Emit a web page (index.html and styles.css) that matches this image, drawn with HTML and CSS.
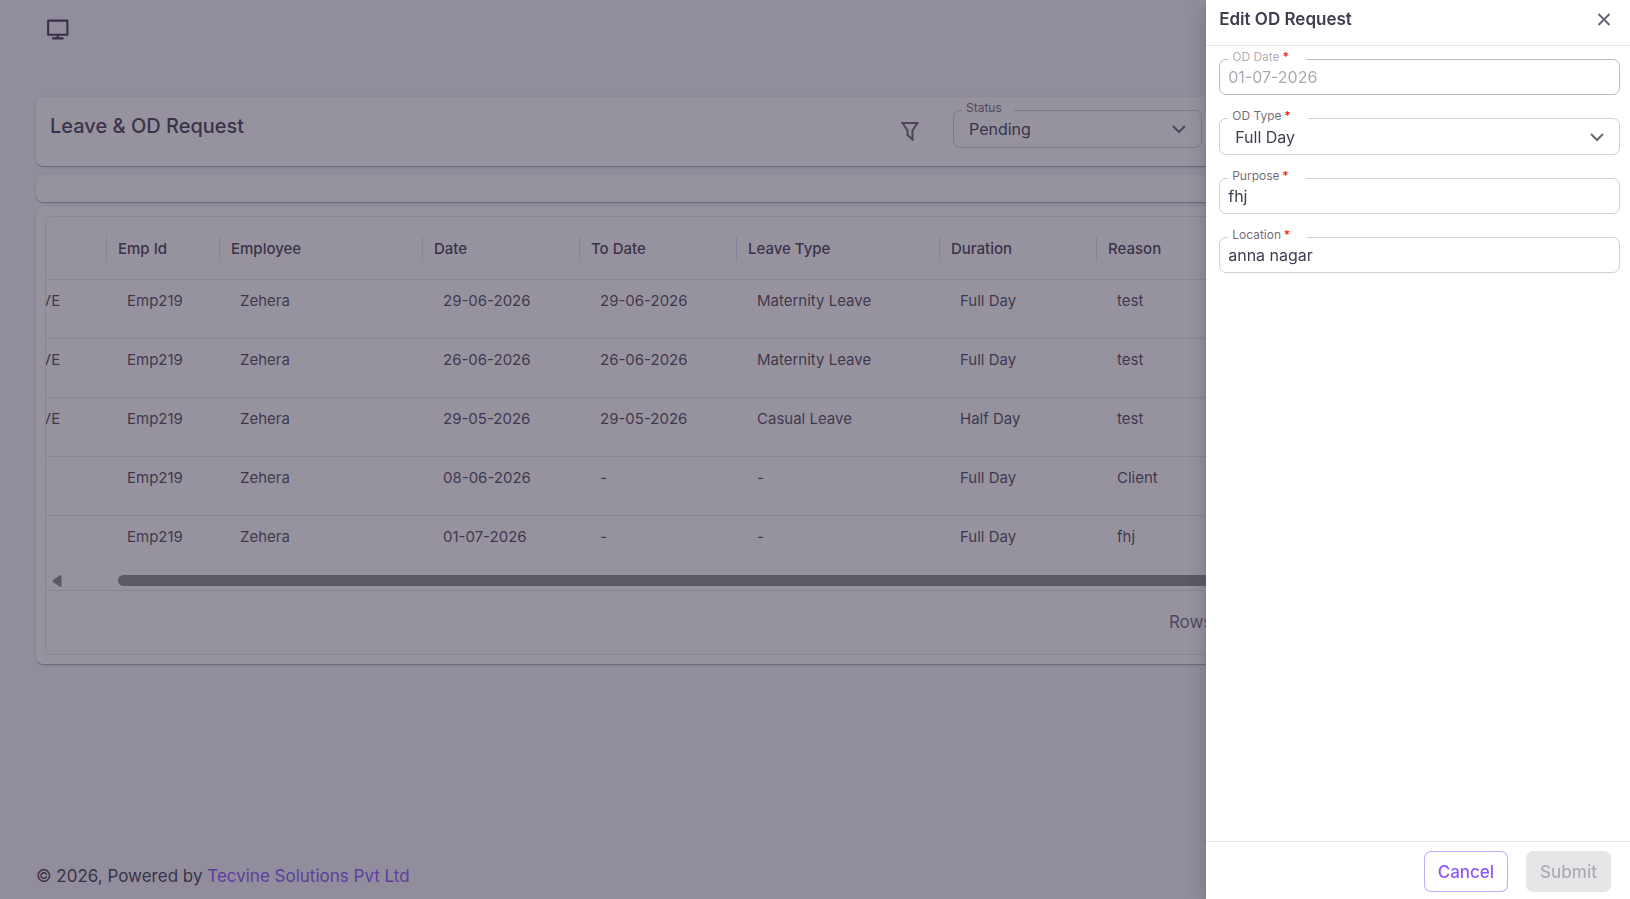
FILE: index.html
```html
<!DOCTYPE html>
<html lang="en">
<head>
    <meta charset="UTF-8">
    <meta name="viewport" content="width=device-width, initial-scale=1.0">
    <title>Leave &amp; OD Request</title>
    <link rel="stylesheet" href="styles.css">
</head>
<body>

    <div class="page">
        <header class="navbar">
            <button type="button" class="icon-button" aria-label="Display mode">
                <svg width="25" height="25" viewBox="0 0 24 24" fill="none" stroke="currentColor" stroke-width="2" stroke-linejoin="round" stroke-linecap="round">
                    <path d="M3 3.500h18.500v13.500H3zM12.200 17v3M7.500 20.500h9.500"/>
                </svg>
            </button>
        </header>

        <main class="content">
            <section class="card toolbar">
                <h1>Leave &amp; OD Request</h1>
                <div class="toolbar-actions">
                    <button type="button" class="icon-button filter-button" aria-label="Filter">
                        <svg width="18" height="20" viewBox="0 0 18 20" fill="none" stroke="currentColor" stroke-width="2">
                            <path d="M1.500 2h15l-5 7.500v9l-5-4.500V9.500z"/>
                        </svg>
                    </button>
                    <div class="field status-field">
                        <label for="status">Status</label>
                        <select id="status">
                            <option>Pending</option>
                        </select>
                        <svg class="chevron" width="14" height="9" viewBox="0 0 14 9" fill="none" stroke="currentColor" stroke-width="2">
                            <path d="M1 1l6 6 6-6"/>
                        </svg>
                    </div>
                </div>
            </section>

            <section class="card spacer-card"></section>

            <section class="card grid-card">
                <div class="data-grid">
                    <table>
                        <colgroup>
                            <col class="col-small">
                            <col class="col-small">
                            <col class="col-large">
                            <col class="col-medium">
                            <col class="col-medium">
                            <col class="col-large">
                            <col class="col-medium">
                            <col>
                        </colgroup>
                        <thead>
                            <tr>
                                <th><span>&nbsp;</span></th>
                                <th><span>Emp Id</span></th>
                                <th><span>Employee</span></th>
                                <th><span>Date</span></th>
                                <th><span>To Date</span></th>
                                <th><span>Leave Type</span></th>
                                <th><span>Duration</span></th>
                                <th><span>Reason</span></th>
                            </tr>
                        </thead>
                        <tbody>
                            <tr><td>LEAVE</td><td>Emp219</td><td>Zehera</td><td>29-06-2026</td><td>29-06-2026</td><td>Maternity Leave</td><td>Full Day</td><td>test</td></tr>
                            <tr><td>LEAVE</td><td>Emp219</td><td>Zehera</td><td>26-06-2026</td><td>26-06-2026</td><td>Maternity Leave</td><td>Full Day</td><td>test</td></tr>
                            <tr><td>LEAVE</td><td>Emp219</td><td>Zehera</td><td>29-05-2026</td><td>29-05-2026</td><td>Casual Leave</td><td>Half Day</td><td>test</td></tr>
                            <tr><td></td><td>Emp219</td><td>Zehera</td><td>08-06-2026</td><td>-</td><td>-</td><td>Full Day</td><td>Client</td></tr>
                            <tr><td></td><td>Emp219</td><td>Zehera</td><td>01-07-2026</td><td>-</td><td>-</td><td>Full Day</td><td>fhj</td></tr>
                        </tbody>
                    </table>
                    <div class="scrollbar">
                        <svg width="10" height="12" viewBox="0 0 10 12" fill="currentColor">
                            <path d="M8 0.300Q9.500 -0.300 9.500 1v10q0 1.300-1.500 0.700L1 7Q0 6 1 5z"/>
                        </svg>
                        <div class="scrollbar-thumb"></div>
                    </div>
                    <div class="grid-footer">Rows per page:</div>
                </div>
            </section>
        </main>

        <footer class="footer">
            © 2026, Powered by <a href="#">Tecvine Solutions Pvt Ltd</a>
        </footer>
    </div>

    <div class="backdrop"></div>

    <!-- Edit drawer -->
    <form class="drawer">
        <div class="drawer-header">
            <h2>Edit OD Request</h2>
            <button type="button" class="icon-button close-button" aria-label="Close">
                <svg width="14" height="14" viewBox="0 0 14 14" fill="none" stroke="currentColor" stroke-width="2">
                    <path d="M1.500 2l11 11M12.500 2l-11 11"/>
                </svg>
            </button>
        </div>

        <div class="drawer-body">
            <div class="field disabled">
                <label for="od-date">OD Date<span class="required">*</span></label>
                <input type="text" id="od-date" value="01-07-2026" disabled>
            </div>
            <div class="field select-field">
                <label for="od-type">OD Type<span class="required">*</span></label>
                <select id="od-type">
                    <option>Full Day</option>
                </select>
                <svg class="chevron" width="14" height="9" viewBox="0 0 14 9" fill="none" stroke="currentColor" stroke-width="2">
                    <path d="M1 1l6 6 6-6"/>
                </svg>
            </div>
            <div class="field">
                <label for="purpose">Purpose<span class="required">*</span></label>
                <input type="text" id="purpose" value="fhj">
            </div>
            <div class="field">
                <label for="location">Location<span class="required">*</span></label>
                <input type="text" id="location" value="anna nagar">
            </div>
        </div>

        <div class="drawer-footer">
            <button type="button" class="btn btn-outlined">Cancel</button>
            <button type="submit" class="btn btn-filled" disabled>Submit</button>
        </div>
    </form>

</body>
</html>
```

FILE: styles.css
```css
:root {
    --text: rgba(46, 38, 61, 0.9);
    --text-light: rgba(46, 38, 61, 0.7);
    --text-disabled: rgba(46, 38, 61, 0.4);
    --divider: rgba(46, 38, 61, 0.12);
    --outline: rgba(46, 38, 61, 0.22);
    --primary: #8c57ff;
}

* {
    box-sizing: border-box;
}

body {
    margin: 0;
    font-family: Inter, "Liberation Sans", sans-serif;
    font-size: 15px;
    color: var(--text);
    background-color: #f4f5fa;
}

h1, h2 {
    margin: 0;
}

a {
    color: var(--primary);
    text-decoration: none;
}

.page {
    display: flex;
    flex-direction: column;
    min-height: 100vh;
    padding: 0 36px;
}

.icon-button {
    display: flex;
    padding: 0;
    border: none;
    background: none;
    color: var(--text);
    cursor: pointer;
}

.navbar {
    display: flex;
    align-items: center;
    height: 58px;
    padding: 0 9px;
}

.content {
    flex: 1;
    padding-top: 39px;
}

.card {
    background-color: #fff;
    border-radius: 7px;
    box-shadow: 0 2px 1px -1px rgba(46, 38, 61, 0.2), 0 1px 1px rgba(46, 38, 61, 0.14), 0 1px 3px rgba(46, 38, 61, 0.12);
}

.toolbar {
    display: flex;
    justify-content: space-between;
    height: 69px;
    margin-bottom: 9px;
    padding: 13px 14px;
}

.toolbar h1 {
    font-size: 20px;
    font-weight: 500;
    line-height: 32px;
}

.toolbar-actions {
    display: flex;
    align-items: flex-start;
    gap: 34px;
    padding-right: 378px;
}

.filter-button {
    padding-top: 11px;
    color: var(--text-light);
}

.spacer-card {
    height: 27px;
    margin-bottom: 5px;
}

.grid-card {
    padding: 9px;
}

/* Outlined text fields */
.field {
    position: relative;
    height: 36px;
    border: 1px solid var(--outline);
    border-radius: 7px;
}

.field label {
    position: absolute;
    top: -11px;
    left: 8px;
    padding: 0 17px 0 4px;
    background-color: #fff;
    color: var(--text-light);
    font-size: 12px;
    line-height: 15px;
}

.field input,
.field select {
    width: 100%;
    height: 100%;
    padding: 0 8px;
    border: none;
    outline: none;
    border-radius: 7px;
    appearance: none;
    background: transparent;
    color: var(--text);
    font-family: inherit;
    font-size: 16px;
}

.field select {
    padding: 0 15px;
}

.field .chevron {
    position: absolute;
    top: 14px;
    right: 15px;
    color: var(--text-light);
    pointer-events: none;
}

.field.disabled {
    border-color: rgba(46, 38, 61, 0.32);
}

.field.disabled label,
.field.disabled input {
    color: var(--text-disabled);
}

.required {
    margin-left: 3px;
    color: #f00;
}

.select-field {
    height: 37px;
}

.status-field {
    width: 249px;
    height: 38px;
}

.status-field label {
    padding-right: 12px;
}

/* Data grid */
.data-grid {
    overflow: hidden;
    border: 1px solid var(--divider);
    border-radius: 7px;
}

/* scrolled to the right, first column is cut off */
.data-grid table {
    width: calc(100% + 52px);
    margin-left: -52px;
    table-layout: fixed;
    border-collapse: separate;
    border-spacing: 0;
}

.col-small {
    width: 113px;
}

.col-medium {
    width: 157px;
}

.col-large {
    width: 203px;
}

th {
    height: 63px;
    padding: 0;
    border-bottom: 1px solid var(--divider);
    text-align: left;
    font-weight: 500;
}

th span {
    display: block;
    padding-left: 11px;
    border-right: 1px solid var(--divider);
    line-height: 25px;
}

td {
    height: 59px;
    padding: 11px 0 0 20px;
    border-bottom: 1px solid var(--divider);
    vertical-align: top;
    line-height: 20px;
    color: rgba(46, 38, 61, 0.85);
}

tbody tr:last-child td {
    border-bottom: none;
}

.scrollbar {
    display: flex;
    align-items: center;
    gap: 56px;
    height: 15px;
    padding: 0 0 4px 6px;
    color: #8b8b8b;
}

.scrollbar-thumb {
    flex: 1;
    height: 11px;
    border-radius: 6px;
    background-color: #8b8b8b;
}

.grid-footer {
    height: 64px;
    padding-right: 290px;
    border-top: 1px solid var(--divider);
    color: var(--text-light);
    font-size: 17px;
    line-height: 63px;
    text-align: right;
}

.footer {
    padding: 12px 0 11px;
    font-size: 17px;
    line-height: 24px;
}

/* Drawer */
.backdrop {
    position: fixed;
    inset: 0;
    background-color: rgba(46, 38, 61, 0.5);
}

.drawer {
    position: fixed;
    top: 0;
    right: 0;
    bottom: 0;
    display: flex;
    flex-direction: column;
    width: 26%;
    background-color: #fff;
    box-shadow: 0 6px 16px rgba(46, 38, 61, 0.3);
}

.drawer-header {
    display: flex;
    justify-content: space-between;
    align-items: center;
    height: 46px;
    padding: 0 19px 7px 13px;
    border-bottom: 1px solid var(--divider);
}

.drawer-header h2 {
    font-size: 17px;
    font-weight: 600;
}

.close-button {
    color: var(--text-light);
}

.drawer-body {
    flex: 1;
    display: flex;
    flex-direction: column;
    gap: 23px;
    padding: 13px 10px 13px 13px;
}

.drawer-footer {
    display: flex;
    justify-content: flex-end;
    gap: 18px;
    padding: 9px 19px 7px;
    border-top: 1px solid var(--divider);
}

.btn {
    height: 41px;
    padding: 0 13px;
    border: 1px solid transparent;
    border-radius: 7px;
    font-family: inherit;
    font-size: 17px;
    font-weight: 500;
    cursor: pointer;
}

.btn-outlined {
    border-color: rgba(140, 87, 255, 0.5);
    background-color: #fff;
    color: var(--primary);
}

.btn-filled:disabled {
    background-color: rgba(46, 38, 61, 0.12);
    color: rgba(46, 38, 61, 0.3);
    cursor: default;
}
```
